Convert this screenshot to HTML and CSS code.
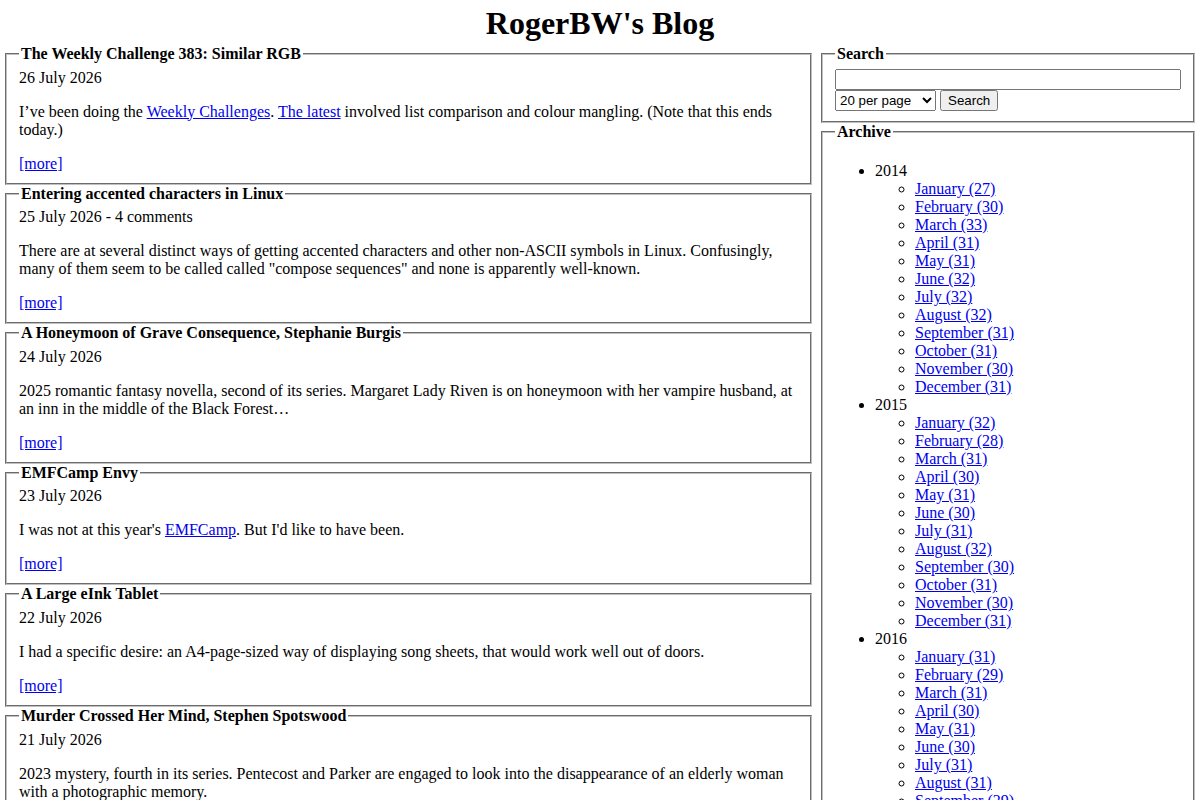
FILE: index.html
```html
<!DOCTYPE html>
<html lang="en">
<head>
    <meta charset="UTF-8">
    <title>RogerBW's Blog</title>
    <link rel="stylesheet" href="styles.css">
</head>
<body>
    <h1 class="site-title">RogerBW's Blog</h1>

    <div class="layout">
        <div class="posts">
            <fieldset class="post">
                <legend>The Weekly Challenge 383: Similar RGB</legend>
                <div class="post-date">26 July 2026</div>
                <p>I’ve been doing the <a href="#">Weekly Challenges</a>. <a href="#">The latest</a> involved list comparison and colour mangling. (Note that this ends today.)</p>
                <a href="#">[more]</a>
            </fieldset>

            <fieldset class="post">
                <legend>Entering accented characters in Linux</legend>
                <div class="post-date">25 July 2026 - 4 comments</div>
                <p>There are at several distinct ways of getting accented characters and other non-ASCII symbols in Linux. Confusingly, many of them seem to be called called "compose sequences" and none is apparently well-known.</p>
                <a href="#">[more]</a>
            </fieldset>

            <fieldset class="post">
                <legend>A Honeymoon of Grave Consequence, Stephanie Burgis</legend>
                <div class="post-date">24 July 2026</div>
                <p>2025 romantic fantasy novella, second of its series. Margaret Lady Riven is on honeymoon with her vampire husband, at an inn in the middle of the Black Forest…</p>
                <a href="#">[more]</a>
            </fieldset>

            <fieldset class="post">
                <legend>EMFCamp Envy</legend>
                <div class="post-date">23 July 2026</div>
                <p>I was not at this year's <a href="#">EMFCamp</a>. But I'd like to have been.</p>
                <a href="#">[more]</a>
            </fieldset>

            <fieldset class="post">
                <legend>A Large eInk Tablet</legend>
                <div class="post-date">22 July 2026</div>
                <p>I had a specific desire: an A4-page-sized way of displaying song sheets, that would work well out of doors.</p>
                <a href="#">[more]</a>
            </fieldset>

            <fieldset class="post">
                <legend>Murder Crossed Her Mind, Stephen Spotswood</legend>
                <div class="post-date">21 July 2026</div>
                <p>2023 mystery, fourth in its series. Pentecost and Parker are engaged to look into the disappearance of an elderly woman with a photographic memory.</p>
                <a href="#">[more]</a>
            </fieldset>
        </div>

        <div class="sidebar">
            <fieldset class="box">
                <legend>Search</legend>
                <form class="search-form">
                    <input type="text" name="q" class="search-input">
                    <div class="search-row">
                        <select name="per">
                            <option>20 per page</option>
                            <option>50 per page</option>
                            <option>100 per page</option>
                        </select>
                        <button type="submit">Search</button>
                    </div>
                </form>
            </fieldset>

            <fieldset class="box">
                <legend>Archive</legend>
                <ul class="archive" id="archive"></ul>
            </fieldset>
        </div>
    </div>

    <script>
        // Post counts per month, oldest year first
        const archive = {
            2014: [27, 30, 33, 31, 31, 32, 32, 32, 31, 31, 30, 31],
            2015: [32, 28, 31, 30, 31, 30, 31, 32, 30, 31, 30, 31],
            2016: [31, 29, 31, 30, 31, 30, 31, 31, 29, 31, 30, 31],
            2017: [31, 28, 31, 30, 31, 30, 31, 31, 30, 31, 30, 31]
        };
        const months = ['January', 'February', 'March', 'April', 'May', 'June',
            'July', 'August', 'September', 'October', 'November', 'December'];

        const list = document.getElementById('archive');
        Object.keys(archive).forEach(function(year) {
            const li = document.createElement('li');
            li.textContent = year;
            const sub = document.createElement('ul');
            archive[year].forEach(function(count, i) {
                const item = document.createElement('li');
                const link = document.createElement('a');
                link.href = '#';
                link.textContent = months[i] + ' (' + count + ')';
                item.appendChild(link);
                sub.appendChild(item);
            });
            li.appendChild(sub);
            list.appendChild(li);
        });
    </script>
</body>
</html>
```

FILE: styles.css
```css
body {
    margin: 0;
    padding: 3px;
    font-family: "Liberation Serif", "Times New Roman", serif;
    font-size: 16px;
    color: #000;
    background: #fff;
}

a {
    color: #0000ee;
}

.site-title {
    margin: 2px 0 3px;
    text-align: center;
    font-size: 32px;
}

.layout {
    display: grid;
    grid-template-columns: 811px 1fr;
    gap: 5px;
    align-items: start;
}

fieldset {
    margin: 0 2px;
    padding: 0.35em 0.75em 0.625em;
    border: 2px groove #c0c0c0;
}

legend {
    font-weight: bold;
    padding: 0 2px;
}

.post p {
    margin: 16px 0;
}

.search-input {
    display: block;
    width: 100%;
    box-sizing: border-box;
    margin: 0;
}

.search-row {
    display: flex;
    gap: 4px;
}

.search-row select,
.search-row button {
    margin: 0;
}

.archive {
    margin: 16px 0;
    padding-left: 40px;
}

.archive ul {
    margin: 0;
    padding-left: 40px;
}
```
